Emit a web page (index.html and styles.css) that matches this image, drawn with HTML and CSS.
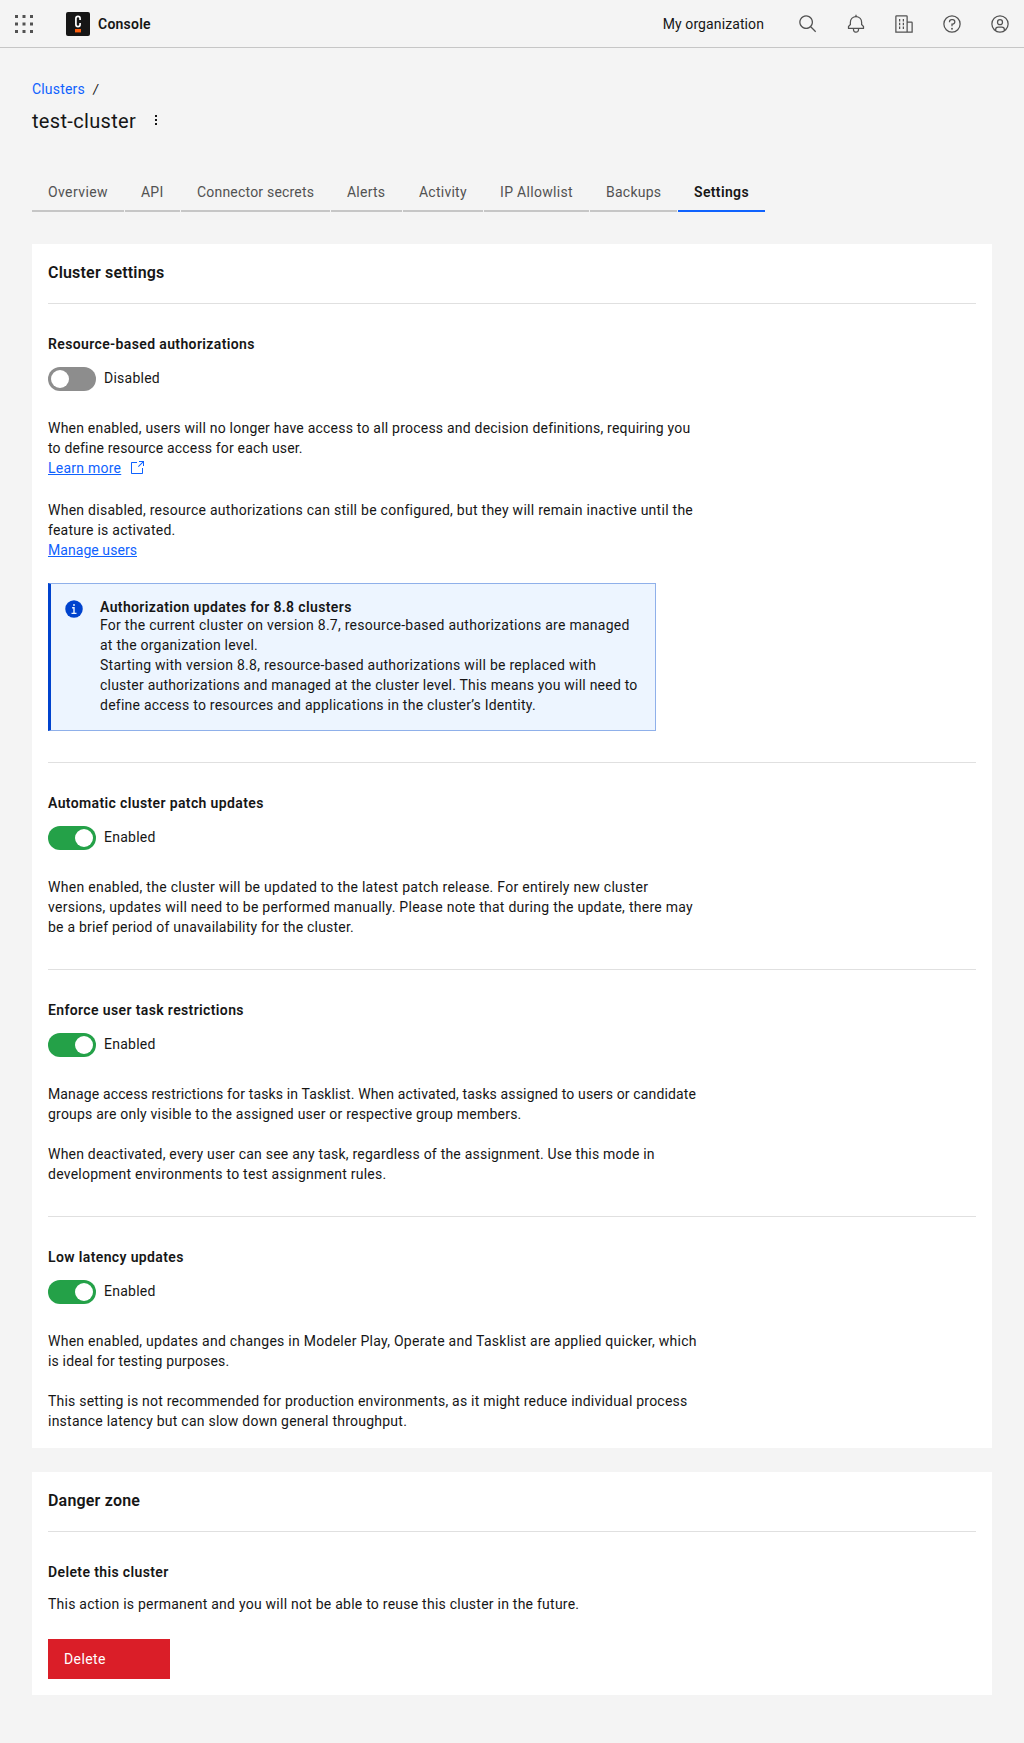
FILE: index.html
```html
<!DOCTYPE html>
<html lang="en">
<head>
<meta charset="utf-8">
<title>Console – test-cluster settings</title>
<link rel="stylesheet" href="styles.css">
</head>
<body>
<header class="topbar">
  <button class="icon-btn" aria-label="Apps">
    <svg width="20" height="20" viewBox="0 0 20 20"><path d="M1 1h3v3H1zM8.5 1h3v3h-3zM16 1h3v3h-3zM1 8.500h3v3H1zM8.500 8.500h3v3h-3zM16 8.500h3v3h-3zM1 16h3v3H1zM8.500 16h3v3h-3zM16 16h3v3h-3z"/></svg>
  </button>
  <a class="brand" href="#">
    <svg width="24" height="24" viewBox="0 0 24 24"><rect width="24" height="24" rx="2" fill="#161616"/><path d="M14.100 8V6.500a2.100 2.100 0 0 0-4.200 0v6a2.100 2.100 0 0 0 4.200 0V11" fill="none" stroke="#fff" stroke-width="1.700"/><rect x="9" y="17" width="6" height="3.400" fill="#fc5d0d"/></svg>
    <span class="brand-name">Console</span>
  </a>
  <span class="org">My organization</span>
  <nav class="actions">
    <button class="icon-btn" aria-label="Search"><svg width="20" height="20" viewBox="0 0 32 32"><path d="M29,27.5859l-7.5521-7.5521a11.0177,11.0177,0,1,0-1.4141,1.4141L27.5859,29ZM4,13a9,9,0,1,1,9,9A9.01,9.01,0,0,1,4,13Z"/></svg></button>
    <button class="icon-btn" aria-label="Notifications"><svg width="20" height="20" viewBox="0 0 32 32"><path d="M28.7071,19.293,26,16.5859V13a10.0136,10.0136,0,0,0-9-9.9492V1H15V3.0508A10.0136,10.0136,0,0,0,6,13v3.5859L3.2929,19.293A1,1,0,0,0,3,20v3a1,1,0,0,0,1,1h7v.7768a5.152,5.152,0,0,0,4.5,5.1987A5.0057,5.0057,0,0,0,21,25V24h7a1,1,0,0,0,1-1V20A1,1,0,0,0,28.7071,19.293ZM19,25a3,3,0,0,1-6,0V24h6Zm8-3H5V20.4141L7.707,17.707A1,1,0,0,0,8,17V13a8,8,0,0,1,16,0v4a1,1,0,0,0,.293.707L27,20.4141Z"/></svg></button>
    <button class="icon-btn" aria-label="Organization"><svg width="20" height="20" viewBox="0 0 32 32"><path d="M8 8h2v4H8zM8 14h2v4H8zM14 8h2v4h-2zM14 14h2v4h-2zM8 20h2v4H8zM14 20h2v4h-2z"/><path d="M30 14a2 2 0 0 0-2-2h-6V4a2 2 0 0 0-2-2H4a2 2 0 0 0-2 2v26h28ZM4 4h16v24H4Zm18 24V14h6v14Z"/></svg></button>
    <button class="icon-btn" aria-label="Help"><svg width="20" height="20" viewBox="0 0 32 32"><path d="M16,2A14,14,0,1,0,30,16,14,14,0,0,0,16,2Zm0,26A12,12,0,1,1,28,16,12,12,0,0,1,16,28Z"/><circle cx="16" cy="23.5" r="1.5"/><path d="M17,8H15.5A4.49,4.49,0,0,0,11,12.5V13h2v-.5A2.5,2.5,0,0,1,15.5,10H17a2.5,2.5,0,0,1,0,5H15v4.5h2V17a4.5,4.5,0,0,0,0-9Z"/></svg></button>
    <button class="icon-btn" aria-label="User"><svg width="20" height="20" viewBox="0 0 32 32"><path d="M16 8a5 5 0 1 0 5 5A5 5 0 0 0 16 8Zm0 8a3 3 0 1 1 3-3A3.0034 3.0034 0 0 1 16 16Z"/><path d="M16 2A14 14 0 1 0 30 16 14.0158 14.0158 0 0 0 16 2ZM10 26.3765V25a3.0033 3.0033 0 0 1 3-3h6a3.0033 3.0033 0 0 1 3 3v1.3765a11.8989 11.8989 0 0 1-12 0Zm13.9925-1.4507A5.0016 5.0016 0 0 0 19 20H13a5.0016 5.0016 0 0 0-4.9925 4.9258 12 12 0 1 1 15.985 0Z"/></svg></button>
  </nav>
</header>

<main class="page">
  <div class="breadcrumb"><a href="#">Clusters</a><span class="slash">/</span></div>
  <div class="title-row">
    <h1>test-cluster</h1>
    <svg class="kebab" width="16" height="16" viewBox="0 0 16 16"><path d="M7 3h2v2H7zM7 7h2v2H7zM7 11h2v2H7z"/></svg>
  </div>

  <nav class="tabs">
    <a class="tab t-overview" href="#">Overview</a>
    <a class="tab t-api" href="#">API</a>
    <a class="tab t-secrets" href="#">Connector secrets</a>
    <a class="tab t-alerts" href="#">Alerts</a>
    <a class="tab t-activity" href="#">Activity</a>
    <a class="tab t-ip" href="#">IP Allowlist</a>
    <a class="tab t-backups" href="#">Backups</a>
    <a class="tab t-settings active" href="#">Settings</a>
  </nav>

  <div class="card">
    <h2>Cluster settings</h2>

    <section class="setting first">
      <h3>Resource-based authorizations</h3>
      <div class="toggle-row"><span class="toggle"></span><span>Disabled</span></div>
      <p><span class="snug">When enabled, users will no longer have access to all process and decision definitions, requiring you</span><br><span class="tight">to define resource access for each user.</span><br><a class="link" href="#">Learn more</a><svg class="launch" width="16" height="16" viewBox="0 0 16 16"><path d="M13 14H3c-.6 0-1-.4-1-1V3c0-.6.4-1 1-1h5v1H3v10h10V8h1v5c0 .6-.4 1-1 1z"/><path d="M10 1v1h3.3L9 6.3l.7.7L14 2.700V6h1V1z"/></svg></p>
      <p class="second"><span class="loose">When disabled, resource authorizations can still be configured, but they will remain inactive until the</span><br>feature is activated.<br><a class="link manage" href="#">Manage users</a></p>
      <div class="notice">
        <svg width="20" height="20" viewBox="0 0 32 32"><path fill="#0043ce" d="M16,2A14,14,0,1,0,30,16,14,14,0,0,0,16,2Z"/><path fill="#edf5ff" d="M16 8a1.5 1.5 0 1 1-1.500 1.500A1.500 1.500 0 0 1 16 8ZM20 24.125H12v-2.250h2.875V15.125H13v-2.250h4.125v9H20Z"/></svg>
        <div class="notice-body">
          <h4>Authorization updates for 8.8 clusters</h4>
          <p><span class="loose">For the current cluster on version 8.7, resource-based authorizations are managed</span><br>at the organization level.<br><span class="loose">Starting with version 8.8, resource-based authorizations will be replaced with</span><br><span class="snug">cluster authorizations and managed at the cluster level. This means you will need to</span><br>define access to resources and applications in the cluster’s Identity.</p>
        </div>
      </div>
    </section>

    <section class="setting">
      <h3>Automatic cluster patch updates</h3>
      <div class="toggle-row"><span class="toggle on"></span><span>Enabled</span></div>
      <p><span class="looser">When enabled, the cluster will be updated to the latest patch release. For entirely new cluster</span><br><span class="loose">versions, updates will need to be performed manually. Please note that during the update, there may</span><br><span class="snug">be a brief period of unavailability for the cluster.</span></p>
    </section>

    <section class="setting">
      <h3>Enforce user task restrictions</h3>
      <div class="toggle-row"><span class="toggle on"></span><span>Enabled</span></div>
      <p><span class="tighter">Manage access restrictions for tasks in Tasklist. When activated, tasks assigned to users or candidate</span><br><span class="snug">groups are only visible to the assigned user or respective group members.</span><br><br><span class="snug">When deactivated, every user can see any task, regardless of the assignment. Use this mode in</span><br>development environments to test assignment rules.</p>
    </section>

    <section class="setting last">
      <h3>Low latency updates</h3>
      <div class="toggle-row"><span class="toggle on"></span><span>Enabled</span></div>
      <p><span class="loose">When enabled, updates and changes in Modeler Play, Operate and Tasklist are applied quicker, which</span><br><span class="tight">is ideal for testing purposes.</span><br><br><span class="snug">This setting is not recommended for production environments, as it might reduce individual process</span><br>instance latency but can slow down general throughput.</p>
    </section>
  </div>

  <div class="card danger">
    <h2>Danger zone</h2>
    <section class="setting last">
      <h3>Delete this cluster</h3>
      <p>This action is permanent and you will not be able to reuse this cluster in the future.</p>
      <button class="delete">Delete</button>
    </section>
  </div>
</main>
</body>
</html>
```
FILE: styles.css
```css
* { box-sizing: border-box; }
body {
  margin: 0;
  min-height: 1743px;
  background: #f4f4f4;
  color: #161616;
  font: 14px/20px Roboto, "Noto Sans", sans-serif;
  letter-spacing: 0.24px;
}
h1, h2, h3, h4, p { margin: 0; font-weight: 400; }
a { color: #0f62fe; text-decoration: none; }
button { border: 0; padding: 0; background: none; font: inherit; letter-spacing: inherit; color: inherit; }
svg { display: block; flex: none; }

/* tracking adjustments for individual lines */
.tighter { letter-spacing: 0.14px; }
.tight { letter-spacing: 0.165px; }
.snug { letter-spacing: 0.217px; }
.loose { letter-spacing: 0.268px; }
.looser { letter-spacing: 0.285px; }

.topbar { display: flex; align-items: center; height: 48px; border-bottom: 1px solid #c6c6c6; }
.icon-btn { display: flex; align-items: center; justify-content: center; width: 48px; height: 48px; fill: #525252; }
.brand { display: flex; align-items: center; gap: 8px; margin-left: 18px; color: #161616; padding-top: 1px; }
.brand-name { font-weight: 600; }
.org { margin-left: auto; margin-right: 20px; letter-spacing: 0.1px; }
.actions { display: flex; }

.page { padding: 31px 32px 0; }
.breadcrumb { display: flex; gap: 8px; height: 20px; letter-spacing: 0.17px; }
.slash { transform: skewX(-5deg); }
.title-row { display: flex; align-items: flex-start; height: 28px; margin-top: 8px; }
h1 { font-size: 20px; line-height: 28px; letter-spacing: 0.33px; }
.kebab { margin: 5px 0 0 12px; fill: #161616; }

.tabs { display: flex; gap: 1px; margin-top: 37px; height: 40px; }
.tab { height: 40px; padding: 10px 0 0 16px; border-bottom: 2px solid #c6c6c6; color: #525252; white-space: nowrap; }
.tab.active { border-color: #0f62fe; color: #161616; font-weight: 600; }
.t-overview { width: 92px; letter-spacing: 0.4px; }
.t-api { width: 55px; }
.t-secrets { width: 149px; letter-spacing: 0.2px; }
.t-alerts { width: 71px; }
.t-activity { width: 80px; }
.t-ip { width: 105px; letter-spacing: 0.32px; }
.t-backups { width: 87px; }
.t-settings { width: 87px; letter-spacing: 0.36px; }

.card { margin-top: 32px; padding: 17px 16px; background: #fff; }
.card h2 { padding-bottom: 18px; font-size: 16px; line-height: 24px; font-weight: 600; letter-spacing: 0.19px; }
.setting { padding: 30px 0 32px; border-top: 1px solid #e0e0e0; }
.setting.first { padding-bottom: 31px; }
.setting.last { padding-bottom: 0; }
h3, h4 { font-size: 14px; font-weight: 600; letter-spacing: 0.37px; }
.setting p { white-space: nowrap; }
.toggle-row { display: flex; gap: 8px; height: 24px; margin: 13px 0 27px; }
.toggle { display: flex; width: 48px; height: 24px; padding: 3px; border-radius: 12px; background: #8d8d8d; }
.toggle::before { content: ""; width: 18px; height: 18px; border-radius: 50%; background: #fff; }
.toggle.on { justify-content: flex-end; background: #24a148; }
.toggle-row span:last-child { padding-top: 1px; }
.link { text-decoration: underline; }
.manage { letter-spacing: 0.06px; }
.launch { display: inline-block; margin-left: 8px; vertical-align: -3px; fill: #0f62fe; }
.second { margin-top: 22px; }

.notice { display: flex; gap: 16px; width: 608px; height: 148px; margin-top: 23px; padding: 14px 16px 0 13px; border: 1px solid #8fb0ea; border-left: 3px solid #0043ce; background: #edf5ff; }
.notice svg { margin-top: 1px; }
h4 { height: 17px; line-height: 18px; }

.danger { margin-top: 24px; padding-bottom: 16px; }
.danger .setting p { margin-top: 12px; }
.delete { display: block; width: 122px; height: 40px; margin-top: 25px; padding-left: 16px; background: #da1e28; color: #fff; text-align: left; letter-spacing: 0.4px; }
```
